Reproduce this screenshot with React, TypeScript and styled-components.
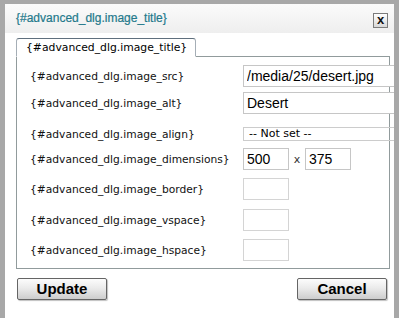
import React from 'react';
import styled, { createGlobalStyle } from 'styled-components';

const GlobalStyle = createGlobalStyle`
  html, body {
    margin: 0;
    padding: 0;
    background: #a8a8a8;
    height: 100%;
    overflow: hidden;
  }
`;

// -----------------------------------------------------------------------------
// Layout
// -----------------------------------------------------------------------------
const Frame = styled.div`
  padding: 4px 5px 0 5px;
  height: 318px;
  box-sizing: border-box;
`;

const Dialog = styled.div`
  width: 389px;
  height: 314px;
  background: #ffffff;
  overflow: hidden;
  display: flex;
  flex-direction: column;
`;

const TitleBar = styled.div`
  height: 29px;
  flex: none;
  display: flex;
  align-items: center;
  justify-content: space-between;
  padding: 0 6px 0 11px;
  background: linear-gradient(#fbfbfb, #eeeeee);
`;

const Title = styled.span`
  font-family: 'Liberation Sans', Arial, sans-serif;
  font-size: 12px;
  color: #23798b;
  margin-top: -2px;
  -webkit-text-stroke: 0.2px #23798b;
`;

const CloseButton = styled.div`
  width: 13px;
  height: 12px;
  border: 1px solid #7c7c7c;
  background: linear-gradient(#ffffff, #d8d8d8);
  display: flex;
  align-items: center;
  justify-content: center;
  font-family: 'Liberation Sans', Arial, sans-serif;
  font-weight: bold;
  font-size: 13px;
  line-height: 1;
  color: #111;
  margin-top: 3px;
  padding-bottom: 1px;
  box-sizing: content-box;
`;

const TabStrip = styled.div`
  margin: 5px 0 -1px 11px;
  display: flex;
  position: relative;
  z-index: 1;
`;

const Tab = styled.div`
  width: 180px;
  height: 19px;
  border: 1px solid #a5aeb6;
  border-top-color: #5f6f7d;
  border-bottom: 1px solid #ffffff;
  border-radius: 3px 3px 0 0;
  background: #ffffff;
  padding-left: 9px;
  box-sizing: border-box;
  font-family: 'DejaVu Sans', Verdana, sans-serif;
  font-size: 10.8px;
  color: #000;
  line-height: 17px;
`;

const Panel = styled.div`
  margin-left: 11px;
  width: 374px;
  height: 213px;
  box-sizing: border-box;
  border: 1px solid #919b9c;
  padding: 8px 0 0 13px;
  display: flex;
  flex-direction: column;
`;

const Row = styled.div<{ $gap: number; $h: number }>`
  display: grid;
  grid-template-columns: 213px auto;
  align-items: center;
  height: ${(p) => p.$h}px;
  margin-top: ${(p) => p.$gap}px;
`;

const Label = styled.label`
  font-family: 'DejaVu Sans', Verdana, sans-serif;
  font-size: 10.7px;
  color: #111;
  white-space: nowrap;
`;

const Field = styled.div`
  display: flex;
  align-items: center;
  height: 100%;
`;

const TextInput = styled.input<{ $w: number; $border?: string }>`
  width: ${(p) => p.$w}px;
  height: 100%;
  box-sizing: border-box;
  border: 1px solid ${(p) => p.$border || '#c6c6c6'};
  padding: 0 3px;
  margin: 0;
  font-family: 'Liberation Sans', Arial, sans-serif;
  font-size: 14px;
  color: #000;
  background: #fff;
  outline: none;
`;

const SelectBox = styled.div`
  width: 170px;
  height: 100%;
  box-sizing: border-box;
  border: 1px solid #cccccc;
  padding-left: 5px;
  font-family: 'DejaVu Sans', Verdana, sans-serif;
  font-size: 11px;
  line-height: 12px;
  color: #000;
  white-space: nowrap;
`;

const Times = styled.span`
  font-family: 'DejaVu Sans', Verdana, sans-serif;
  font-size: 11px;
  color: #333;
  width: 16px;
  text-align: center;
`;

const ButtonBar = styled.div`
  display: flex;
  justify-content: space-between;
  padding: 0 7px 0 12px;
  margin-top: 9px;
`;

const Button = styled.button`
  width: 90px;
  height: 22px;
  border: 1px solid #656565;
  border-radius: 2px;
  background: linear-gradient(#fcfcfc 0%, #ebebeb 45%, #cdcdcd 100%);
  box-shadow: 1px 1px 1px rgba(0, 0, 0, 0.25);
  font-family: 'Liberation Sans', Arial, sans-serif;
  font-weight: bold;
  font-size: 15px;
  color: #000;
  padding: 0;
  line-height: 20px;
`;

// -----------------------------------------------------------------------------
// Data
// -----------------------------------------------------------------------------
const small = [
  { key: 'border', gap: 8 },
  { key: 'vspace', gap: 9 },
  { key: 'hspace', gap: 8 },
];

const App = (): JSX.Element => (
  <>
    <GlobalStyle />
    <Frame>
      <Dialog>
        <TitleBar>
          <Title>{'{#advanced_dlg.image_title}'}</Title>
          <CloseButton>x</CloseButton>
        </TitleBar>
        <TabStrip>
          <Tab>{'{#advanced_dlg.image_title}'}</Tab>
        </TabStrip>
        <Panel>
          <Row $gap={0} $h={22}>
            <Label>{'{#advanced_dlg.image_src}'}</Label>
            <Field>
              <TextInput $w={170} readOnly value="/media/25/desert.jpg" />
            </Field>
          </Row>
          <Row $gap={5} $h={22}>
            <Label>{'{#advanced_dlg.image_alt}'}</Label>
            <Field>
              <TextInput $w={170} readOnly value="Desert" />
            </Field>
          </Row>
          <Row $gap={13} $h={14}>
            <Label>{'{#advanced_dlg.image_align}'}</Label>
            <Field>
              <SelectBox>-- Not set --</SelectBox>
            </Field>
          </Row>
          <Row $gap={7} $h={22}>
            <Label>{'{#advanced_dlg.image_dimensions}'}</Label>
            <Field>
              <TextInput $w={46} readOnly value="500" />
              <Times>x</Times>
              <TextInput $w={46} readOnly value="375" />
            </Field>
          </Row>
          {small.map((s) => (
            <Row key={s.key} $gap={s.gap} $h={22}>
              <Label>{`{#advanced_dlg.image_${s.key}}`}</Label>
              <Field>
                <TextInput $w={46} $border="#d4d4d4" readOnly value="" />
              </Field>
            </Row>
          ))}
        </Panel>
        <ButtonBar>
          <Button>Update</Button>
          <Button>Cancel</Button>
        </ButtonBar>
      </Dialog>
    </Frame>
  </>
);

export default App;
